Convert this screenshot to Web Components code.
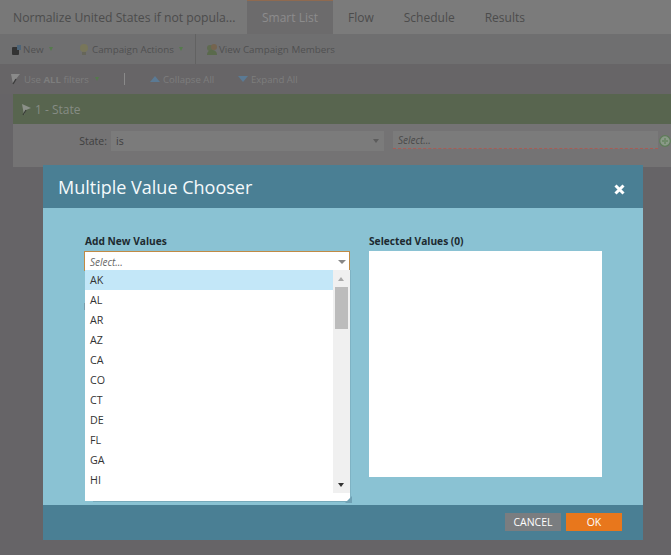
<!DOCTYPE html>
<html><head><meta charset="utf-8">
<style>
html,body{margin:0;padding:0;height:555px;overflow:hidden;background:#666467;font-family:"Open Sans",sans-serif}
</style></head><body>
<campaign-page></campaign-page>
<value-chooser></value-chooser>
<template id="page-t">
<style>
:host{display:block;height:555px;width:671px;overflow:hidden;font-size:10px;color:#4a4a4a}
.tabs{display:flex;height:34px;background:#7b7b7b;font-size:12px;color:#4c4c4c;align-items:stretch}
.tabs>div{display:flex;align-items:center}
.title{width:247px;padding-left:13px;box-sizing:border-box;background:#787878;font-size:12.2px}
.active{width:86px;justify-content:center;background:#6c6b6c;color:#8c8c8c;box-shadow:inset 0 1px 0 #8f6a50}
.tab{padding:0 24.5px 0 0}
.flow{padding-left:15px!important}
.bar{height:30px;background:#6f6f70;display:flex;align-items:center;box-sizing:border-box;color:#505050;white-space:nowrap;font-size:9.8px}
.bar2{background:#676567;color:#7d7d7d;height:30px;font-size:9.6px}
.i{display:flex;align-items:center;gap:2px}
.dot{width:0;height:0;border:2.5px solid transparent;border-top:4px solid #557a4c;border-bottom:0}
.green{margin-left:13px;height:30px;background:#58654f;color:#868c84;font-size:12px;display:flex;align-items:center;padding-left:8px;gap:3px}
.row{margin-left:13px;height:43px;background:#747374;display:flex;box-sizing:border-box;padding:7px 0 0 0;color:#3f3f3f;position:relative}
.lab{width:94px;text-align:right;padding-top:3px;font-size:10.5px;box-sizing:border-box}
.sel{margin-left:4px;width:273px;height:20px;background:#7b7b7b;display:flex;align-items:center;justify-content:space-between;padding:0 5px;box-sizing:border-box;font-size:10.5px}
.inp{margin-left:9px;width:265px;height:18px;background:#7b7b7b;border-bottom:1px dashed #a85c55;display:flex;align-items:center;padding-left:5px;box-sizing:border-box;font-style:italic;font-size:10px;color:#4a4a4a}
.tri{width:0;height:0;border:3px solid transparent;border-top:4px solid #5c5c5c;border-bottom:0}
svg{display:block;flex:none}
</style>
<div class="tabs">
  <div class="title">Normalize United States if not popula...</div>
  <div class="active">Smart List</div>
  <div class="tab flow" style="padding-right:30px">Flow</div>
  <div class="tab" style="padding-right:30px">Schedule</div>
  <div class="tab">Results</div>
</div>
<div class="bar">
  <div class="i" style="margin-left:11px;width:67px;gap:1px"><svg width="11" height="11" viewBox="0 0 11 11"><rect x="1" y="3" width="7" height="8" rx="1" fill="#333"/><path d="M6 1h4v5H6z" fill="#4c6478"/></svg><span>New</span><span class="dot" style="margin-left:5px"></span></div>
  <div class="i" style="width:117px"><svg width="12" height="13" viewBox="0 0 12 13"><circle cx="6" cy="5" r="4" fill="#78765a"/><rect x="4" y="9" width="4" height="3" fill="#66665a"/></svg><span>Campaign Actions</span><span class="dot" style="margin-left:3px"></span></div>
  <div style="width:1px;height:30px;background:#626262;margin-right:10px"></div>
  <div class="i" style="gap:1px"><svg width="12" height="13" viewBox="0 0 12 13"><circle cx="4" cy="5" r="3" fill="#5f6b50"/><circle cx="8" cy="4" r="3" fill="#75644e"/><path d="M1 12c0-4 3-5 5-5s5 1 5 5z" fill="#5a6a4c"/></svg><span>View Campaign Members</span></div>
</div>
<div class="bar bar2">
  <div class="i" style="margin-left:10px;width:114px"><svg width="12" height="12" viewBox="0 0 12 12"><path d="M1 1h9L6 6l-3 5z" fill="#8a8a8a"/><path d="M3 11 6 6" stroke="#3c3c3c" stroke-width="1.4"/></svg><span>Use <b>ALL</b> filters</span><span class="dot" style="margin-left:4px"></span></div>
  <div style="width:1px;height:12px;background:#8a8a8a;margin-right:25px"></div>
  <div class="i" style="width:88px;gap:3px"><svg width="10" height="6" viewBox="0 0 10 6"><path d="M5 0l5 6H0z" fill="#5b7a94"/></svg><span>Collapse All</span></div>
  <div class="i" style="gap:3px"><svg width="10" height="6" viewBox="0 0 10 6"><path d="M0 0h10L5 6z" fill="#5b7a94"/></svg><span>Expand All</span></div>
</div>
<div class="green"><svg width="11" height="13" viewBox="0 0 11 13"><path d="M1 1l9 4-5 2-2 5z" fill="#8b9088"/><path d="M2 12 5 7" stroke="#3a3f38" stroke-width="1.3"/></svg><span>1 - State</span></div>
<div class="row">
  <div class="lab">State:</div>
  <div class="sel"><span>is</span><span class="tri"></span></div>
  <div class="inp">Select...</div>
  <svg style="position:absolute;left:646px;top:11px" width="12" height="12" viewBox="0 0 12 12"><circle cx="6" cy="6" r="5.3" fill="#8a9a88" stroke="#5e7c58" stroke-width="1.2"/><path d="M6 3v6M3 6h6" stroke="#6f8a6a" stroke-width="2"/></svg>
</div>
</template>

<template id="chooser-t">
<style>
:host{display:block;position:absolute;left:43px;top:165px;width:600px;height:375px;background:#8ac2d3;font-family:"Open Sans",sans-serif;color:#1d2a30}
.head{height:43px;background:#4a7f94;display:flex;align-items:center;justify-content:space-between;padding:0 18px 0 15px;box-sizing:border-box;color:#f4f9fb;font-size:18px}
.head svg{margin-top:5px}
.body{height:297px;box-sizing:border-box;padding:24px 41px 0 42px;display:flex;gap:19px;position:relative}
.col{display:flex;flex-direction:column}
.c1{width:265px}.c2{width:233px}
.lbl{font-size:10.2px;font-weight:700;line-height:19px;height:19px;white-space:nowrap}
.combo{height:20px;box-sizing:border-box;width:266px;margin-left:-1px;background:#fff;border:1px solid #c08a45;border-bottom:0;display:flex;align-items:center;justify-content:space-between;padding:0 3px 0 5px;font-style:italic;font-size:10px;color:#666}
.tri{width:0;height:0;border:4px solid transparent;border-top:4px solid #888;border-bottom:0}
.sel{width:233px;height:226px;background:#fff}
.foot{height:35px;background:#4a7f94;display:flex;justify-content:flex-end;gap:5px;padding:8px 21px 0 0;box-sizing:border-box}
.list{position:absolute;left:42px;top:62px;width:265px;height:231px;background:#fff;display:flex;box-shadow:1px 0 0 #7fb3c4}
.shadow{position:absolute;left:50px;top:293px;width:258px;height:1px;background:#76a9ba}
.items{flex:1;font-size:10.7px;color:#333}
.items div{height:20px;line-height:20px;padding-left:5px}
.items div:first-child{background:#c3e7f8}
.sb{width:17px;background:#f0f0f0;position:relative;height:223px}
.thumb{position:absolute;left:2px;top:17px;width:13px;height:42px;background:#bcbcbc}
.up,.dn{position:absolute;left:5px;width:0;height:0;border:3.5px solid transparent}
.up{top:7px;border-bottom:4px solid #a9a9a9;border-top:0}
.dn{bottom:6px;border-top:4px solid #333;border-bottom:0}
.grip{position:absolute;right:-2px;bottom:-2px}
.speck{position:absolute;width:1px;height:3px;background:#3a5a68}
</style>
<div class="head"><span>Multiple Value Chooser</span><svg width="11" height="11" viewBox="0 0 11 11"><path d="M1.5 1.5l8 8M9.5 1.5l-8 8" stroke="#fff" stroke-width="3"/></svg></div>
<div class="body">
  <div class="col c1"><div class="lbl">Add New Values</div><div class="combo"><span>Select...</span><span class="tri"></span></div></div>
  <div class="col c2"><div class="lbl">Selected Values (0)</div><div class="sel"></div></div>
  <span class="speck" style="left:307px;top:93px"></span>
  <span class="speck" style="left:41px;top:95px;height:7px;background:#7a9eac"></span>
  <div class="shadow"></div>
  <div class="list">
    <div class="items"><div>AK</div><div>AL</div><div>AR</div><div>AZ</div><div>CA</div><div>CO</div><div>CT</div><div>DE</div><div>FL</div><div>GA</div><div>HI</div></div>
    <div class="sb"><div class="up"></div><div class="thumb"></div><div class="dn"></div></div>
    <svg class="grip" width="7" height="7" viewBox="0 0 7 7"><path d="M7 0v7H0z" fill="#6fa0b3"/></svg>
  </div>
</div>
<div class="foot"><action-btn style="--bg:#7a7d80">CANCEL</action-btn><action-btn style="--bg:#e8771c">OK</action-btn></div>
</template>
<template id="btn-t">
<style>:host{display:flex;width:56px;height:18px;align-items:center;justify-content:center;background:var(--bg);color:#fff;font-size:10.5px}</style><slot></slot>
</template>
<script>
function def(n,t){customElements.define(n,class extends HTMLElement{constructor(){super();this.attachShadow({mode:'open'}).appendChild(document.getElementById(t).content.cloneNode(true));}});}
def('action-btn','btn-t');def('campaign-page','page-t');def('value-chooser','chooser-t');
</script>
</body></html>
